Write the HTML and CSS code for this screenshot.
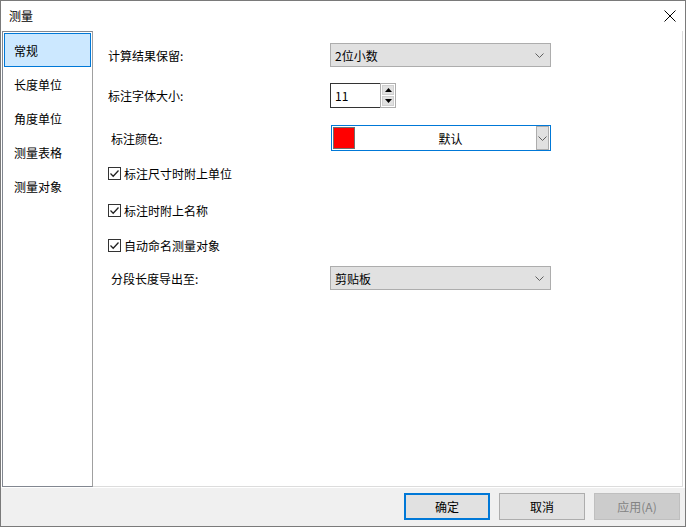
FILE: index.html
```html
<!DOCTYPE html>
<html lang="zh-CN">
<head>
    <meta charset="UTF-8">
    <title>测量</title>
    <link rel="stylesheet" href="styles.css">
</head>
<body>
    <div class="window">
        <div class="titlebar">
            <span class="title">测量</span>
            <svg class="close" width="12" height="12" viewBox="0 0 12 12">
                <path d="M0.5 0.5 L11.5 11.5 M11.5 0.5 L0.5 11.5" stroke="#000" stroke-width="1" fill="none"/>
            </svg>
        </div>

        <div class="main">
            <ul class="sidebar">
                <li class="nav-item active">常规</li>
                <li class="nav-item">长度单位</li>
                <li class="nav-item">角度单位</li>
                <li class="nav-item">测量表格</li>
                <li class="nav-item">测量对象</li>
            </ul>

            <div class="content">
                <div class="row row-24">
                    <span class="label">计算结果保留:</span>
                    <div class="select">
                        <span>2位小数</span>
                        <svg class="chevron" width="9" height="5" viewBox="0 0 9 5"><path d="M0.5 0.5 L4.5 4.5 L8.5 0.5" stroke="#606060" fill="none"/></svg>
                    </div>
                </div>

                <div class="row row-25 mt-16">
                    <span class="label">标注字体大小:</span>
                    <div class="spinner">
                        <span class="spin-value">11</span>
                        <div class="spin-btns">
                            <div class="spin-btn"><svg width="7" height="4" viewBox="0 0 7 4"><path d="M3.5 0 L7 4 L0 4 Z" fill="#000"/></svg></div>
                            <div class="spin-btn"><svg width="7" height="4" viewBox="0 0 7 4"><path d="M0 0 L7 0 L3.5 4 Z" fill="#000"/></svg></div>
                        </div>
                    </div>
                </div>

                <div class="row row-26 mt-17">
                    <span class="label label-indent">标注颜色:</span>
                    <div class="color-combo">
                        <span class="swatch"></span>
                        <span class="color-name">默认</span>
                        <span class="combo-btn">
                            <svg width="9" height="5" viewBox="0 0 9 5"><path d="M0.5 0.5 L4.5 4.5 L8.5 0.5" stroke="#606060" fill="none"/></svg>
                        </span>
                    </div>
                </div>

                <label class="row row-18 mt-13 check">
                    <span class="checkbox"><svg width="11" height="11" viewBox="0 0 11 11"><path d="M1.5 5.5 L4.2 8.2 L9.5 2.5" stroke="#222" stroke-width="1.3" fill="none"/></svg></span>
                    标注尺寸时附上单位
                </label>

                <label class="row row-18 mt-19 check">
                    <span class="checkbox"><svg width="11" height="11" viewBox="0 0 11 11"><path d="M1.5 5.5 L4.2 8.2 L9.5 2.5" stroke="#222" stroke-width="1.3" fill="none"/></svg></span>
                    标注时附上名称
                </label>

                <label class="row row-18 mt-17 check">
                    <span class="checkbox"><svg width="11" height="11" viewBox="0 0 11 11"><path d="M1.5 5.5 L4.2 8.2 L9.5 2.5" stroke="#222" stroke-width="1.3" fill="none"/></svg></span>
                    自动命名测量对象
                </label>

                <div class="row row-24 mt-12">
                    <span class="label label-indent">分段长度导出至:</span>
                    <div class="select">
                        <span>剪贴板</span>
                        <svg class="chevron" width="9" height="5" viewBox="0 0 9 5"><path d="M0.5 0.5 L4.5 4.5 L8.5 0.5" stroke="#606060" fill="none"/></svg>
                    </div>
                </div>
            </div>
        </div>

        <div class="footer">
            <button class="btn btn-default">确定</button>
            <button class="btn">取消</button>
            <button class="btn" disabled>应用(A)</button>
        </div>
    </div>
</body>
</html>
```

FILE: styles.css
```css
* {
    box-sizing: border-box;
}
body {
    margin: 0;
    font-family: "Noto Sans CJK SC", "Noto Sans", sans-serif;
    font-size: 12px;
    color: #000;
    background: #fff;
}
.window {
    width: 686px;
    height: 527px;
    border: 1px solid #7a7a7a;
    display: flex;
    flex-direction: column;
    background: #fff;
}
.titlebar {
    height: 30px;
    display: flex;
    align-items: center;
    justify-content: space-between;
    padding: 0 9px 0 8px;
}
.title {
    line-height: 1;
}

/* main area */
.main {
    height: 457px;
    display: flex;
    padding-left: 1px;
}
.sidebar {
    list-style: none;
    margin: 0;
    padding: 1px 0 0 0;
    width: 91px;
    height: 456px;
    border: 1px solid #828790;
    border-right-color: #a0a0a0;
}
.nav-item {
    height: 34px;
    margin: 0 1px;
    padding-left: 9px;
    display: flex;
    align-items: center;
    border: 1px solid transparent;
}
.nav-item.active {
    background: #cce8ff;
    border-color: #0078d7;
}
.content {
    width: 590px;
    height: 456px;
    border-right: 1px solid #dcdcdc;
    border-bottom: 1px solid #dcdcdc;
    padding: 12px 0 0 15px;
    display: flex;
    flex-direction: column;
}
.row {
    display: flex;
    align-items: center;
}
.row-18 { height: 18px; }
.row-24 { height: 24px; }
.row-25 { height: 25px; }
.row-26 { height: 26px; }
.mt-12 { margin-top: 12px; }
.mt-13 { margin-top: 13px; }
.mt-16 { margin-top: 16px; }
.mt-17 { margin-top: 17px; }
.mt-19 { margin-top: 19px; }

.label {
    width: 222px;
    flex-shrink: 0;
}
.label-indent {
    padding-left: 3px;
}

/* controls */
.select {
    width: 221px;
    height: 24px;
    background: #e1e1e1;
    border: 1px solid #adadad;
    display: flex;
    align-items: center;
    justify-content: space-between;
    padding: 0 6px 0 4px;
}
.spinner {
    display: flex;
    height: 25px;
}
.spin-value {
    width: 50px;
    height: 25px;
    border: 1px solid #333;
    border-right: none;
    padding-left: 4px;
    display: flex;
    align-items: center;
}
.spin-btns {
    width: 16px;
    height: 25px;
    border: 1px solid #adadad;
    display: flex;
    flex-direction: column;
    gap: 1px;
    padding: 1px;
    background: #fff;
}
.spin-btn {
    flex: 1;
    background: #e1e1e1;
    border: 1px solid #cfcfcf;
    display: flex;
    align-items: center;
    justify-content: center;
}
.color-combo {
    margin-left: 1px;
    width: 220px;
    height: 26px;
    border: 1px solid #0078d7;
    display: flex;
    align-items: center;
    padding: 1px;
}
.swatch {
    width: 22px;
    height: 22px;
    background: #ff0000;
    border: 1px solid #6f6f6f;
}
.color-name {
    flex: 1;
    text-align: center;
    padding-left: 10px;
}
.combo-btn {
    width: 13px;
    height: 24px;
    background: #e1e1e1;
    border: 1px solid #adadad;
    display: flex;
    align-items: center;
    justify-content: center;
}
.check {
    gap: 3px;
}
.checkbox {
    width: 13px;
    height: 13px;
    border: 1px solid #333;
    display: flex;
    align-items: center;
    justify-content: center;
    background: #fff;
}

/* footer buttons */
.footer {
    height: 38px;
    background: #f0f0f0;
    display: flex;
    justify-content: flex-end;
    align-items: flex-start;
    gap: 9px;
    padding: 5px 5px 0 0;
}
.btn {
    width: 86px;
    height: 27px;
    font-family: inherit;
    font-size: 12px;
    background: #e1e1e1;
    border: 1px solid #adadad;
    color: #000;
    padding: 0;
}
.btn-default {
    border: 2px solid #0078d7;
}
.btn:disabled {
    background: #cccccc;
    border-color: #bfbfbf;
    color: #838383;
}
```
